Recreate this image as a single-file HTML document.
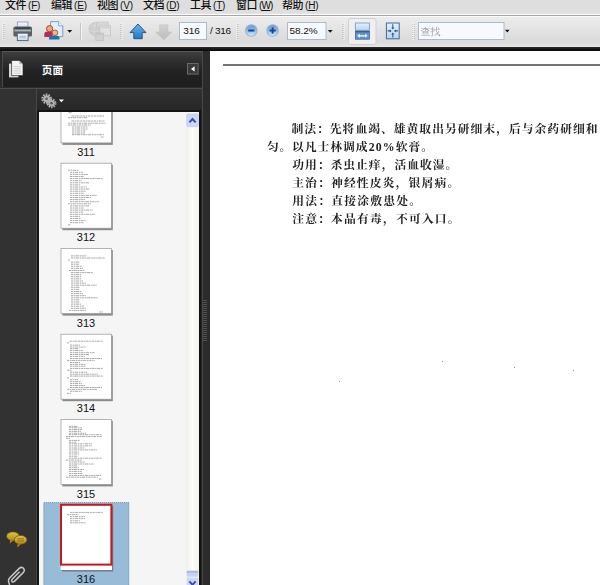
<!DOCTYPE html>
<html><head><meta charset="utf-8"><title>Reader</title>
<style>
html,body{margin:0;padding:0;}
body{width:600px;height:585px;position:relative;overflow:hidden;background:#fff;font-family:"Liberation Sans","Noto Sans CJK SC",sans-serif;}
.abs,#menubar,#toolbar,#blackband,#panel,#doc,#panel *,#toolbar *,#doc *{position:absolute;}
#menubar{left:0;top:0;width:600px;height:14px;background:linear-gradient(#dedede 0,#dedede 9px,#e0e0e0 13px,#e6e6e6 14px);}
#menubar span{position:absolute;top:-3.5px;font-size:11px;line-height:16px;color:#111;white-space:nowrap;font-weight:500;letter-spacing:-0.5px;font-family:"Liberation Sans","Noto Sans CJK SC",sans-serif;}
#menubar span i{font-style:normal;font-weight:400;font-size:10px;letter-spacing:-0.2px;margin-left:2px;position:static !important;}
#menubar span u{position:static !important;}
#menubar span u{text-decoration:underline;text-underline-offset:1px;}
#toolbar{left:0;top:14px;width:600px;height:33px;background:linear-gradient(#fbfbfb 0,#fbfbfb 1px,#a6a6a6 1px,#a6a6a6 2px,#fafafa 2px,#fafafa 3px,#ececec 3.5px,#e6e6e6 12px,#dedede 22px,#dadada 28px,#e2e2e2 31px,#e6e6e6 33px);}
#blackband{left:0;top:47px;width:600px;height:4px;background:linear-gradient(#2e2e2e 0,#1c1c1c 1.5px,#0c0c0c 3px,#0c0c0c 4px);}
#panel{left:0;top:51px;width:210px;height:534px;background:#2d2d2d;}
#doc{left:210px;top:51px;width:390px;height:534px;background:#fff;overflow:hidden;}

#phead{left:2px;top:0;width:200px;height:36px;background:linear-gradient(#404040 0,#333 6px,#222 20px,#1e1e1e 36px);border-top:1px solid #575757;border-left:1px solid #4a4a4a;box-sizing:border-box;}
#pbody{left:0;top:37px;width:203px;height:497px;background:linear-gradient(#313131 0,#262626 22px,#262626 100%);border-top:1px solid #4c4c4c;box-sizing:border-box;}
#pstrip{left:0;top:38px;width:36px;height:496px;background:#323232;border-right:1px solid #474747;}
#plistwrap{left:37px;top:59px;width:164px;height:475px;background:#141414;}
#panel{background:#2b2b2b;}
#psplit{left:202px;top:0;width:1px;height:534px;background:#484848;}
#pgrip{left:203px;top:249px;width:4px;height:42px;background:repeating-linear-gradient(#5a5a5a 0,#5a5a5a 1px,#2b2b2b 1px,#2b2b2b 2px);opacity:0.8;}

#rule{left:13px;top:13px;width:377px;height:2px;background:#747474;}
.ln{font-family:"Liberation Serif","Noto Serif CJK SC",serif;font-weight:700;font-size:11.8px;line-height:18px;height:18px;color:#222;white-space:nowrap;letter-spacing:0.92px;filter:blur(0.3px);}
.ln span{position:static !important;}
.sp{width:1px;height:1px;background:#999;}
</style></head><body>
<div id="menubar">
<span style="left:5px">文件<i>(<u>F</u>)</i></span>
<span style="left:51px">编辑<i>(<u>E</u>)</i></span>
<span style="left:97px">视图<i>(<u>V</u>)</i></span>
<span style="left:143px">文档<i>(<u>D</u>)</i></span>
<span style="left:190px">工具<i>(<u>T</u>)</i></span>
<span style="left:236px">窗口<i style="letter-spacing:-0.9px">(<u>W</u>)</i></span>
<span style="left:282px">帮助<i>(<u>H</u>)</i></span>
</div>
<div id="toolbar">
<svg id="tbsvg" width="600" height="33" viewBox="0 14 600 33" style="left:0;top:0">
<defs>
<linearGradient id="gUp" x1="0" y1="0" x2="0" y2="1"><stop offset="0" stop-color="#6db3e6"/><stop offset="1" stop-color="#2279c4"/></linearGradient>
<linearGradient id="gDn" x1="0" y1="0" x2="0" y2="1"><stop offset="0" stop-color="#d2d2d2"/><stop offset="1" stop-color="#bcbcbc"/></linearGradient>
<linearGradient id="gZ" x1="0" y1="0" x2="0" y2="1"><stop offset="0" stop-color="#5f99d6"/><stop offset="0.5" stop-color="#8dbde8"/><stop offset="1" stop-color="#d6ecfb"/></linearGradient>
<linearGradient id="gPaper" x1="0" y1="0" x2="0" y2="1"><stop offset="0" stop-color="#f4f9fe"/><stop offset="1" stop-color="#c9dcee"/></linearGradient>
<linearGradient id="gFit" x1="0" y1="0" x2="0" y2="1"><stop offset="0" stop-color="#e6f1fb"/><stop offset="1" stop-color="#b7d3ee"/></linearGradient>
<pattern id="grip" width="3" height="2" patternUnits="userSpaceOnUse"><rect x="0" y="0" width="2" height="1" fill="#c2c2c2"/><rect x="1" y="1" width="2" height="1" fill="#f6f6f6"/></pattern>
</defs>
<!-- grips -->
<rect x="2" y="23" width="3" height="17" fill="url(#grip)" opacity="0.7"/>
<rect x="120" y="23" width="3" height="17" fill="url(#grip)" opacity="0.75"/>
<rect x="236" y="23" width="3" height="17" fill="url(#grip)" opacity="0.75"/>
<rect x="342" y="23" width="3" height="17" fill="url(#grip)" opacity="0.75"/>
<rect x="412" y="23" width="3" height="17" fill="url(#grip)" opacity="0.75"/>
<!-- printer -->
<g id="ic-print">
<rect x="17.3" y="22" width="10.6" height="6.5" fill="url(#gPaper)" stroke="#8a98a6" stroke-width="0.8"/>
<rect x="13.4" y="26.6" width="18.6" height="10" rx="1.6" fill="#596069"/>
<rect x="14.4" y="29.6" width="16.6" height="1.8" fill="#aab3bc"/>
<rect x="15.4" y="27.4" width="14.6" height="1.6" fill="#3c424a"/>
<rect x="17.3" y="33.2" width="10.8" height="7.4" fill="url(#gPaper)" stroke="#56606c" stroke-width="0.9"/>
<rect x="19.5" y="35.6" width="6.4" height="2.6" fill="#b4c6d8"/>
</g>
<!-- people/doc -->
<g id="ic-collab">
<path d="M50.6 21.6 H58.6 L62.8 25.8 V36.6 H50.6 Z" fill="#e4eefa" stroke="#7d9fc4" stroke-width="1"/>
<path d="M58.6 21.6 V25.8 H62.8" fill="#f8fbff" stroke="#7d9fc4" stroke-width="0.9"/>
<path d="M44.3 37 V34.2 Q44.3 31.6 47.4 31.6 H51 Q52.6 31.6 52.6 34.2 V37 Z" fill="#b22c62"/>
<circle cx="49.6" cy="28.7" r="3.1" fill="#efa979" stroke="#9c4a2a" stroke-width="1"/>
<path d="M49 39.4 V37.6 Q49 35.8 51.6 35.8 H57 Q59.4 35.8 59.4 37.6 V39.4 Z" fill="#1f6fb4"/>
<circle cx="55" cy="32.8" r="2.8" fill="#f1b886" stroke="#9c5a30" stroke-width="0.9"/>
<path d="M67.2 30 H72.2 L69.7 32.8 Z" fill="#111"/>
</g>
<!-- separator -->
<rect x="80" y="23" width="1" height="17" fill="#c4c4c4"/><rect x="81" y="23" width="1" height="17" fill="#f4f4f4"/>
<!-- globe (disabled) -->
<g id="ic-globe" opacity="0.8">
<circle cx="95.4" cy="29" r="6.4" fill="#c9c9c9" stroke="#b6b6b6" stroke-width="0.8"/>
<path d="M90.2 26.2Q95 24 100.4 26.4M89.4 30.4Q95 32.6 101.2 30.6M95.4 22.8Q92.4 29 95.4 35.2" stroke="#d9d9d9" stroke-width="0.8" fill="none"/>
<rect x="96.8" y="22" width="11.4" height="5" fill="#d4d4d4" stroke="#bfbfbf" stroke-width="0.7"/>
<rect x="99.8" y="25.8" width="10.8" height="10" fill="#e2e2e2" stroke="#bdbdbd" stroke-width="0.8"/>
<rect x="100.6" y="26.6" width="9.2" height="1.6" fill="#cdcdcd"/>
<rect x="95.8" y="33" width="7.8" height="7.6" fill="#cecece" stroke="#b9b9b9" stroke-width="0.7"/>
<rect x="96.4" y="33.6" width="6.6" height="1.4" fill="#bfbfbf"/>
</g>
<!-- up arrow -->
<path d="M138 24 L146 32.6 H142.2 V38.7 H133.8 V32.6 H130 Z" fill="url(#gUp)" stroke="#1d4f86" stroke-width="0.9" stroke-linejoin="round"/>
<!-- down arrow -->
<path d="M159.6 24.8 H168 V32 H172 L163.8 40 L155.6 32 H159.6 Z" fill="url(#gDn)" stroke="#c4c4c4" stroke-width="0.6"/>
<!-- page box -->
<rect x="179.5" y="22.5" width="27" height="17" fill="#f6f9fd" stroke="#a9bccd" stroke-width="1"/>
<text transform="translate(0,34.2) scale(1,0.92) translate(0,-34.2)" x="191.6" y="34.1" font-size="10" text-anchor="middle" fill="#111" font-family="Liberation Sans, sans-serif">316</text>
<text transform="translate(0,34.2) scale(1,0.92) translate(0,-34.2)" x="210" y="34.1" font-size="10" letter-spacing="-0.3" fill="#111" font-family="Liberation Sans, sans-serif">/ 316</text>
<!-- zoom out / in -->
<circle cx="251.3" cy="30.5" r="5.7" fill="url(#gZ)" stroke="#9db1c6" stroke-width="1.1"/>
<rect x="248.2" y="29.5" width="6.2" height="2" fill="#174a96"/>
<circle cx="272.6" cy="30.5" r="5.7" fill="url(#gZ)" stroke="#9db1c6" stroke-width="1.1"/>
<rect x="269.5" y="29.5" width="6.2" height="2" fill="#174a96"/><rect x="271.6" y="27.4" width="2" height="6.2" fill="#174a96"/>
<!-- zoom box -->
<rect x="287.5" y="22.5" width="38.5" height="17" fill="#f6f9fd" stroke="#a9bccd" stroke-width="1"/>
<text transform="translate(0,34.2) scale(1,0.92) translate(0,-34.2)" x="289.4" y="34.4" font-size="10" fill="#111" font-family="Liberation Sans, sans-serif">58.2%</text>
<path d="M327.8 30 H332.6 L330.2 32.8 Z" fill="#111"/>
<!-- active button -->
<rect x="348.5" y="18.5" width="27.5" height="26" rx="2" fill="#efefef" stroke="#d0d0d0" stroke-width="1"/>
<!-- fit width icon -->
<g id="ic-fitw">
<rect x="355.4" y="23" width="14" height="7.4" fill="url(#gFit)" stroke="#7f9fc2" stroke-width="0.9"/>
<rect x="355" y="30.8" width="14.8" height="1.4" fill="#3f5f86"/>
<rect x="355.4" y="32.2" width="14" height="7" fill="#5f93cb" stroke="#3f6aa0" stroke-width="0.8"/>
<path d="M357.2 35.8 L359.8 33.8 V35.2 H365 V33.8 L367.6 35.8 L365 37.8 V36.4 H359.8 V37.8 Z" fill="#fff"/>
</g>
<!-- fit page icon -->
<g id="ic-fitp">
<rect x="386.4" y="23" width="12.8" height="15.8" fill="url(#gFit)" stroke="#44699a" stroke-width="1"/>
<path d="M392.8 24.2 V28.4 M392.8 37.6 V33.4 M387.6 30.9 H390.6 M398 30.9 H395" stroke="#2f5a94" stroke-width="1.1" fill="none"/>
<path d="M391.2 27.4 H394.4 L392.8 29.4 Z M391.2 34.4 H394.4 L392.8 32.4 Z M389.8 29.3 V32.5 L391.6 30.9 Z M395.8 29.3 V32.5 L394 30.9 Z" fill="#2f5a94"/>
</g>
<!-- search -->
<rect x="418.5" y="22.5" width="85.5" height="17" fill="#f7f9fc" stroke="#a9bccd" stroke-width="1"/>
<text x="420.6" y="34.6" font-size="10" fill="#a3a3a3" font-family="Liberation Sans, WenQuanYi Zen Hei, Noto Sans CJK SC, sans-serif">查找</text>
<path d="M505 29.8 H509.6 L507.3 32.4 Z" fill="#111"/>
</svg>
</div>
<div id="blackband"></div>
<div id="panel">
<div id="phead"></div>
<div id="pbody"></div>
<div id="pstrip"></div>
<div id="plistwrap"></div>
<div id="psplit"></div>
<div id="pgrip"></div>
<svg id="psvg" width="210" height="534" viewBox="0 51 210 534" style="left:0;top:0">
<defs>
<clipPath id="listclip"><rect x="39" y="112" width="147" height="473"/></clipPath>
<linearGradient id="gSb" x1="0" y1="0" x2="1" y2="0"><stop offset="0" stop-color="#efefeb"/><stop offset="0.5" stop-color="#fdfdf9"/><stop offset="1" stop-color="#f1f1ed"/></linearGradient>
<linearGradient id="gBub" x1="0" y1="0" x2="0" y2="1"><stop offset="0" stop-color="#e2c247"/><stop offset="1" stop-color="#b38c14"/></linearGradient>
</defs>
<!-- header icon: pages -->
<path d="M9 63.6h9.4v13.8H9z" fill="#d9d9d9"/>
<path d="M11.6 60.4h7.6l3.8 3.8v11.4H11.6z" fill="#f4f4f4" stroke="#2a2a2a" stroke-width="0.7"/>
<path d="M19.2 60.4v3.8h3.8z" fill="#bdbdbd"/>
<path d="M13.6 66.6h7.4M13.6 68.8h7.4M13.6 71h7.4M13.6 73.2h7.4" stroke="#c4c4c4" stroke-width="0.8"/>
<text x="41.8" y="74" font-size="10.6" font-weight="bold" fill="#fff" font-family="Liberation Sans, Noto Sans CJK SC, sans-serif">页面</text>
<!-- collapse button -->
<rect x="187.5" y="63.5" width="10.6" height="10.6" fill="#3a3a3a" stroke="#6a6a6a" stroke-width="1"/>
<path d="M194.6 66.2v5.4l-3.6-2.7z" fill="#fff"/>
<!-- gear -->
<g id="ic-gear" fill="#b2b2b2">
<circle cx="46.6" cy="98.8" r="3.5"/><circle cx="46.6" cy="98.8" r="4.3" fill="none" stroke="#b2b2b2" stroke-width="2" stroke-dasharray="1.6 1.1"/>
<circle cx="46.6" cy="98.8" r="1.3" fill="#555"/>
<circle cx="51.5" cy="103.2" r="3.3"/><circle cx="51.5" cy="103.2" r="4" fill="none" stroke="#b2b2b2" stroke-width="1.9" stroke-dasharray="1.5 1.01"/>
<circle cx="51.5" cy="103.2" r="1.3" fill="#555"/>
</g>
<path d="M58.8 99.4h5.2l-2.6 2.8z" fill="#fff"/>
<!-- list -->
<rect x="39" y="112" width="160" height="473" fill="#f5f5f5"/>
<rect x="186" y="112" width="13" height="473" fill="url(#gSb)"/>
<g clip-path="url(#listclip)">
<rect x="62.4" y="79.3" width="50.4" height="65.6" fill="#8a8a8a"/>
<rect x="61" y="77.9" width="50.4" height="65" fill="#fff" stroke="#969696" stroke-width="0.7"/>
<path d="M68.5 112.7H72.0M71.5 116.0H104.0M68.0 117.7H88.0M71.5 121.0H105.0M68.0 123.2H106.0M68.0 125.0H91.0M72.0 127.0H88.0M72.0 129.0H88.0M72.0 131.0H86.0M72.0 133.0H85.0M72.0 134.7H104.0M101.0 137.0H104.0" stroke="#6e6e6e" stroke-width="1" stroke-dasharray="2.4 0.6 1.4 0.5 3.1 0.7 1.8 0.6" opacity="0.6" fill="none"/>
<text x="86" y="156.1" font-size="11" text-anchor="middle" fill="#111" font-family="Liberation Sans, sans-serif">311</text>
<rect x="62.4" y="164.6" width="50.4" height="65.6" fill="#8a8a8a"/>
<rect x="61" y="163.2" width="50.4" height="65" fill="#fff" stroke="#969696" stroke-width="0.7"/>
<path d="M68.0 170.2H79.0M70.0 172.3H83.0M70.0 174.4H88.0M70.0 176.5H84.0M70.0 178.6H103.0M70.0 180.7H82.0M70.0 182.8H89.0M70.0 184.9H80.0M70.0 187.0H87.0M70.0 189.1H90.0M70.0 191.2H86.0M70.0 193.3H84.0M70.0 195.4H97.0M70.0 197.5H91.0M70.0 199.6H85.0M70.0 201.7H99.0M68.0 203.8H91.0M70.0 205.9H89.0M70.0 208.0H84.0M70.0 210.1H93.0M70.0 212.2H83.0M70.0 214.3H95.0M70.0 216.4H80.0M70.0 218.5H81.0M70.0 220.6H86.0M70.0 222.7H84.0M68.0 224.8H71.0" stroke="#6e6e6e" stroke-width="1" stroke-dasharray="2.4 0.6 1.4 0.5 3.1 0.7 1.8 0.6" opacity="0.6" fill="none"/>
<text x="86" y="241.4" font-size="11" text-anchor="middle" fill="#111" font-family="Liberation Sans, sans-serif">312</text>
<rect x="62.4" y="250.0" width="50.4" height="65.6" fill="#8a8a8a"/>
<rect x="61" y="248.6" width="50.4" height="65" fill="#fff" stroke="#969696" stroke-width="0.7"/>
<path d="M71.0 255.9H86.3M71.0 258.0H105.0M68.0 260.1H70.0M71.0 262.1H80.0M71.0 264.2H79.0M71.0 266.3H82.0M71.0 268.4H83.0M69.0 270.5H85.0M71.0 272.6H93.0M71.0 274.7H81.0M71.0 276.8H81.0M71.0 278.9H81.0M71.0 281.0H83.0M71.0 283.1H86.0M71.0 285.2H97.0M71.0 287.3H80.0M71.0 289.4H79.0M71.0 291.5H82.0M71.0 293.6H83.0M71.0 295.7H86.0M71.0 297.8H98.0M71.0 299.9H80.0M71.0 302.0H80.0M71.0 304.1H81.0M71.0 306.2H84.0M71.0 308.3H86.0M69.0 310.4H86.0M99.0 312.0H103.0" stroke="#6e6e6e" stroke-width="1" stroke-dasharray="2.4 0.6 1.4 0.5 3.1 0.7 1.8 0.6" opacity="0.6" fill="none"/>
<text x="86" y="326.8" font-size="11" text-anchor="middle" fill="#111" font-family="Liberation Sans, sans-serif">313</text>
<rect x="62.4" y="335.6" width="50.4" height="65.6" fill="#8a8a8a"/>
<rect x="61" y="334.2" width="50.4" height="65" fill="#fff" stroke="#969696" stroke-width="0.7"/>
<path d="M69.5 341.2H103.0M67.0 342.9H69.0M70.0 345.1H80.0M70.0 347.0H86.0M70.0 348.7H79.0M70.0 350.6H83.0M70.0 352.7H95.0M70.0 354.5H89.0M70.0 356.4H85.0M70.0 358.5H102.0M67.0 360.4H95.0M70.0 362.5H80.0M70.0 364.4H86.0M70.0 366.2H86.0M70.0 368.4H103.0M67.0 370.2H72.0M70.0 372.2H87.0M70.0 374.2H98.0M70.0 376.1H103.0M67.0 377.8H69.0M70.0 379.7H79.0M70.0 381.7H81.0M70.0 383.6H82.0M70.0 385.5H85.0M70.0 387.5H102.0M67.0 389.4H97.0M70.0 391.3H82.0M67.0 393.4H71.0" stroke="#6e6e6e" stroke-width="1" stroke-dasharray="2.4 0.6 1.4 0.5 3.1 0.7 1.8 0.6" opacity="0.6" fill="none"/>
<text x="86" y="412.4" font-size="11" text-anchor="middle" fill="#111" font-family="Liberation Sans, sans-serif">314</text>
<rect x="62.4" y="420.8" width="50.4" height="65.6" fill="#8a8a8a"/>
<rect x="61" y="419.4" width="50.4" height="65" fill="#fff" stroke="#969696" stroke-width="0.7"/>
<path d="M69.0 426.4H78.0M69.0 427.8H82.0M69.0 429.6H82.0M69.0 431.4H81.0M69.0 433.2H86.0M69.0 434.7H102.0M66.0 436.6H102.0M66.0 438.3H70.0M69.0 440.4H80.0M69.0 442.2H76.0M69.0 443.8H92.0M69.0 445.9H92.0M69.0 448.0H85.0M69.0 449.9H97.0M69.0 452.1H79.0M69.0 454.0H79.0M69.0 456.2H78.0M69.0 458.2H102.0M66.0 460.1H82.0M69.0 462.0H85.0M69.0 464.0H94.0M69.0 465.9H77.0M69.0 467.7H79.0M69.0 469.5H84.0M69.0 471.4H82.0M69.0 473.5H83.0M69.0 475.4H101.0M66.0 477.2H98.0M99.0 479.0H102.0" stroke="#6e6e6e" stroke-width="1" stroke-dasharray="2.4 0.6 1.4 0.5 3.1 0.7 1.8 0.6" opacity="0.6" fill="none"/>
<text x="86" y="497.6" font-size="11" text-anchor="middle" fill="#111" font-family="Liberation Sans, sans-serif">315</text>
<rect x="43.8" y="502.6" width="85" height="90" fill="#98bcd7" stroke="#4f6c84" stroke-width="0.8" stroke-dasharray="1 1"/>
<rect x="61.8" y="506.0" width="51.4" height="65.6" fill="#6f8194"/>
<rect x="60.6" y="504.4" width="51.4" height="65.6" fill="#fff"/>
<path d="M70.2 512.4H102.7M66.8 514.6H78.5M70 516.6H85M70 518.6H85M70 520.8H80M70 522.8H86" stroke="#6e6e6e" stroke-width="1" stroke-dasharray="2.4 0.6 1.4 0.5 3.1 0.7 1.8 0.6" opacity="0.6" fill="none"/>
<rect x="61" y="504.8" width="50.4" height="59.8" fill="none" stroke="#c41a1a" stroke-width="2"/>
<text x="86" y="582.8" font-size="11" text-anchor="middle" fill="#111" font-family="Liberation Sans, sans-serif">316</text>
</g>
<!-- scrollbar buttons -->
<rect x="186.8" y="114" width="11.4" height="12.6" rx="1.2" fill="#c9d7fa" stroke="#b5c5f0" stroke-width="0.6"/>
<path d="M189.4 122.4l3.1-3.4l3.1 3.4" stroke="#3b4c9c" stroke-width="1.9" fill="none"/>
<rect x="186.8" y="570.8" width="11.4" height="6" rx="1" fill="#c6d2f4"/>
<rect x="186.8" y="570.8" width="11.4" height="2" fill="#aab8e6"/>
<rect x="186.8" y="577.4" width="11.4" height="10" rx="1.2" fill="#c9d7fa"/>
<path d="M189.4 581.4l3.1 3.4l3.1-3.4" stroke="#3b4c9c" stroke-width="1.9" fill="none"/>
<!-- comments icon -->
<g id="ic-comm">
<path d="M10.2 539.6L9.8 543.6L13.8 540Z" fill="#b8901a"/>
<ellipse cx="12.9" cy="536.3" rx="6.2" ry="4.2" fill="url(#gBub)" stroke="#8a6a10" stroke-width="0.5"/>
<path d="M17.8 543.2L17.2 547.7L21.4 543.6Z" fill="#b08812"/>
<ellipse cx="20.6" cy="539.8" rx="6.3" ry="4.4" fill="url(#gBub)" stroke="#6e520a" stroke-width="0.7"/>
<path d="M17.2 538.8h6.8M17.2 541h6.8" stroke="#8c6c10" stroke-width="0.9"/>
</g>
<!-- paperclip -->
<path d="M9.6 585 L8.6 581.6 Q8.2 579.4 9.8 577.8 L19.2 568.4 Q21.4 566.4 23.4 568.2 Q25.2 570.2 23.4 572.4 L14.4 581.4 Q13 582.6 12 581.4 Q11.2 580.2 12.4 579 L19.6 571.8" stroke="#c6c6c6" stroke-width="1.5" fill="none"/>
</svg>
</div>
<div id="doc">
<div id="rule"></div>
<div class="ln" style="left:81.4px;top:69px;letter-spacing:1.0px">制法：先将血竭、雄黄取出另研细末，后与余药研细和</div>
<div class="ln" style="left:57px;top:87px"><span style="letter-spacing:0.75px">匀。</span>以凡士林调成<span style="letter-spacing:1.1px;margin-left:0.4px">20%</span>软膏。</div>
<div class="ln" style="left:82.2px;top:105px;letter-spacing:0.98px">功用：杀虫止痒，活血收湿。</div>
<div class="ln" style="left:82.2px;top:123px;letter-spacing:1.14px">主治：神经性皮炎，银屑病。</div>
<div class="ln" style="left:82.2px;top:141.2px;letter-spacing:1.2px">用法：直接涂敷患处。</div>
<div class="ln" style="left:82.2px;top:159.2px;letter-spacing:1.17px">注意：本品有毒，不可入口。</div>
<i class="sp" style="left:129px;top:330px"></i><i class="sp" style="left:232px;top:310px"></i><i class="sp" style="left:304px;top:316px"></i><i class="sp" style="left:363px;top:319px"></i>
</div>
</body></html>
